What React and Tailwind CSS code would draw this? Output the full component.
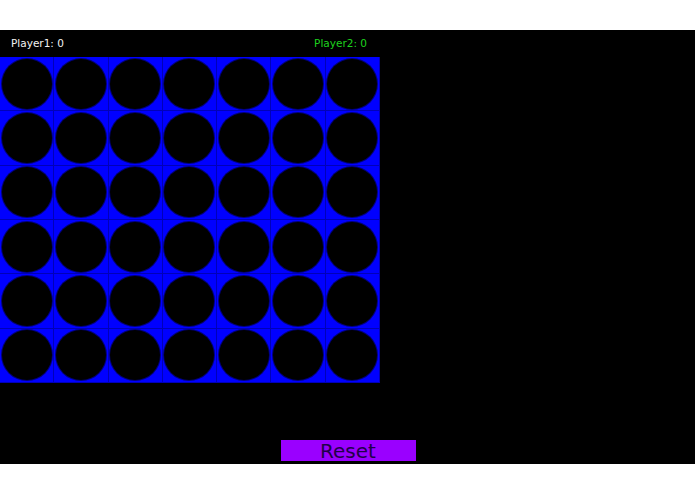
const ROWS = 6;
const COLS = 7;

function Cell() {
  return (
    <div className="flex items-center justify-center border-r border-b border-[#0000b8] bg-[#0000ff]">
      <div className="h-[50px] w-[50px] rounded-full bg-black shadow-[0_0_0_1px_#00007a]" />
    </div>
  );
}

export default function App() {
  const cells = Array.from({ length: ROWS * COLS });

  return (
    <div className="h-[494px] w-[695px] bg-white" style={{ fontFamily: '"DejaVu Sans", "Liberation Sans", sans-serif' }}>
      <div className="h-[30px]" />
      <div className="flex h-[434px] flex-col bg-black">
        {/* scores */}
        <div className="flex h-[27px] w-[380px] items-center justify-between pl-[11px] pr-[13px] text-[10.5px]">
          <span className="text-[#f2f2f2]">Player1: 0</span>
          <span className="text-[#1ed21e]">Player2: 0</span>
        </div>

        {/* board */}
        <div className="grid h-[326px] w-[380px] grid-cols-7 grid-rows-6 bg-[#0000ff]">
          {cells.map((_, i) => (
            <Cell key={i} />
          ))}
        </div>

        <div className="flex-1" />

        <div className="flex justify-center pb-[3px] pl-[1px]">
          <button className="flex h-[21px] w-[135px] items-center justify-center bg-[#9a00ff] text-[20px] leading-none text-[#22004a]">
            Reset
          </button>
        </div>
      </div>
    </div>
  );
}
